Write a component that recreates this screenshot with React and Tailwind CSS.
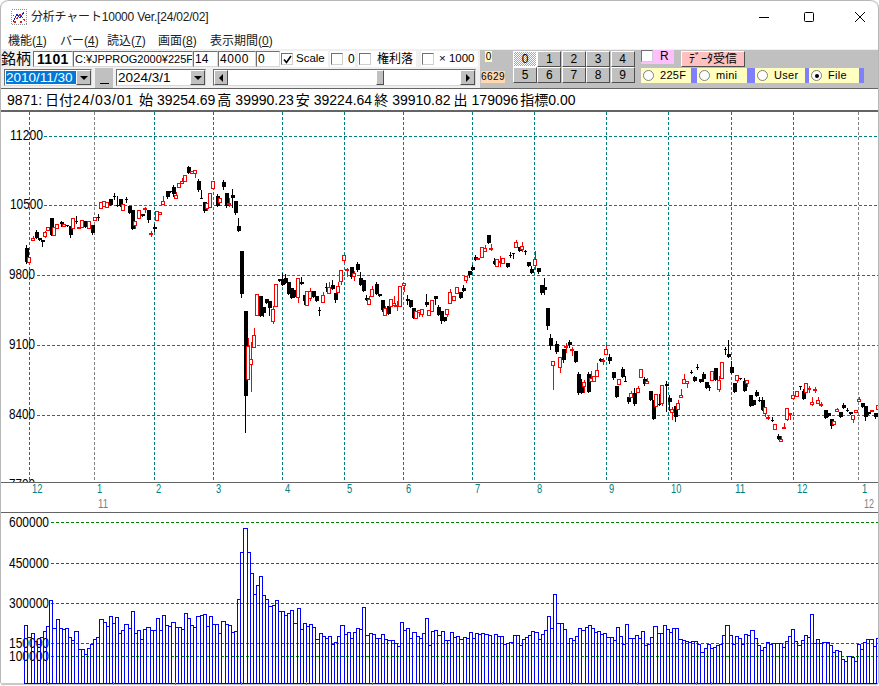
import React from "react";

const FONT = "font-['Liberation_Sans','Noto_Sans_CJK_JP',sans-serif]";
const C4 = [[0,78,388,430,378,432],[1,88,415,428],[1,98,358,364,352],[0,107,340,358,334],[0,116,356,362],[0,125,363,368,363,380],[1,134,340,350,335,353],[1,143,324,332],[0,152,297,347],[1,161,323,347],[1,171,316,328],[0,182,310,316,306,320],[1,192,315,322],[0,200,317,320],[0,209,320,348,320,353],[1,218,298,328],[0,228,305,310,292,312],[1,237,323,328],[1,246,304,323],[0,256,307,323],[1,266,307,326],[0,275,318,342,318,345],[1,285,293,304],[0,294,293,296,285,302],[1,303,250,268],[1,312,246,262],[1,321,250,265],[0,331,240,258],[0,341,232,234,222,240],[0,351,258,262,230,262],[0,360,240,262],[1,369,256,272],[0,378,240,244,235,248],[0,387,260,282],[0,396,272,330],[1,406,306,317,306,327],[1,416,272,298],[0,426,285,290],[1,435,266,270,263,280],[0,444,272,303,272,308],[1,453,341,343,335,352],[0,462,325,330,315,335],[1,471,275,302],[1,481,280,284],[1,490,247,254,232,254],[0,500,217,233,217,237],[0,510,217,220],[0,519,204,226,198,232],[1,528,228,238,220,238],[1,537,192,205],[1,547,186,192,178,192],[1,555,168,185],[0,565,144,161,140,161],[1,576,157,162],[1,585,154,163,154,175],[0,594,186,212,180,216],[0,603,236,238,214,238],[0,612,250,275,250,280],[1,621,252,268,252,272],[1,630,222,265],[1,640,185,208],[0,651,230,262,224,262],[1,660,236,250],[0,669,189,204,183,210],[0,678,222,260,222,265],[1,687,252,256,238,260],[0,696,229,236,210,265],[0,705,246,281,246,285],[0,714,322,335,297,335],[0,724,396,524,396,533],[0,735,576,831,576,938],[1,744,681,780,657,780],[1,752,720,735,669,816],[1,761,648,684,627,684],[1,771,526,589],[0,780,531,590],[0,788,565,582,565,590],[0,798,540,552],[0,808,545,568,545,588],[1,818,570,606,560,612],[1,828,496,562],[0,836,481,486],[0,846,480,497,462,497],[0,855,477,492,465,492],[0,864,490,525],[0,873,508,538],[0,882,513,533]];
const C7 = [[1,23,178,235,178,248],[0,32,188,195,175,195],[0,41,228,246,228,255],[1,50,217,257],[1,59,215,236,208,242],[0,68,215,234],[0,77,231,245],[0,88,272,276,265,288],[1,98,228,250,220,250],[0,107,205,207,192,215],[1,116,205,223,190,223],[0,125,198,210,183,210],[0,134,222,243,222,248],[1,143,202,220,190,220],[1,153,154,186,154,195],[1,162,109,122,109,128],[1,171,151,154,148,170],[0,182,144,174,144,178],[1,191,163,170,155,182],[0,200,135,153,129,156],[0,210,178,197,160,197],[0,219,183,216],[0,227,238,242,228,242],[1,237,241,256,230,256],[1,246,211,230,202,230],[0,258,195,226,188,226],[0,267,225,231],[0,276,244,273,244,276],[1,285,267,289,262,289],[0,294,261,285],[1,303,241,260],[1,312,253,258,232,262],[1,321,258,262,245,272],[1,331,202,260],[1,342,193,197,193,215],[0,351,240,245,228,255],[0,360,243,263],[0,369,267,297],[1,378,277,298],[1,387,273,278,273,290],[1,396,270,286,270,292],[0,407,250,258,225,262],[1,416,274,289],[1,426,244,277],[0,435,231,240,231,255],[0,444,265,287,258,287],[0,453,277,305,277,312],[0,462,293,305],[1,471,271,284,271,292],[1,481,220,253,210,253],[1,491,232,242],[1,501,205,223],[0,510,220,236],[0,519,207,216,198,216],[1,528,172,182,172,188],[0,537,155,168,155,173],[0,546,144,152,138,152],[0,555,114,123,108,123],[1,565,117,120],[1,575,85,115],[1,585,88,97,78,97],[0,594,48,72],[1,603,88,90,75,93],[0,612,125,135,118,135],[1,621,120,142],[1,631,125,128,110,142],[1,640,118,133],[0,651,131,143],[0,659,108,110,98,115],[0,668,102,106,102,117],[1,677,70,83,64,83],[0,687,83,95],[1,696,82,91,70,95],[0,705,97,99,92,105],[0,714,128,140],[0,724,151,162,140,162],[1,734,121,139,97,150],[0,744,148,158,148,162],[0,753,198,222,198,225],[0,763,204,212,178,225],[0,771,267,320,267,330],[0,780,357,380,345,390],[1,790,427,437,427,510],[0,799,376,399,366,402],[1,810,415,445,415,458],[0,819,390,423,390,428],[1,828,382,384,372,398],[0,837,370,378,363,385],[1,846,391,394,385,408],[0,855,397,428],[0,864,477,494],[0,873,501,521,480,521],[1,882,490,498,483,517]];
const C8 = [[0,-7,135,191,130,194],[0,3,170,190,150,190],[1,12,160,170,160,190],[0,23,134,190,128,190],[1,32,148,155,125,155],[1,41,140,155],[1,51,123,140,103,140],[0,59,91,95,86,95],[1,69,94,97,88,105],[1,78,61,74,48,74],[0,88,84,95,75,103],[0,98,129,147,129,150],[0,107,171,203],[1,117,150,164],[0,126,120,145,115,145],[0,135,155,157,140,157],[0,144,205,219,205,222],[1,153,193,203,185,203],[0,163,192,225,178,228],[1,173,178,188,170,188],[1,183,121,145],[0,192,150,164,145,168],[1,201,156,163,148,163],[0,210,187,213],[0,219,213,269],[1,228,196,231],[0,238,226,228,196,228],[1,247,169,221,169,228],[0,258,166,170,155,245],[0,267,206,218,198,243],[1,276,240,250,235,270],[0,285,230,265,230,275],[1,294,223,241,213,241],[1,303,198,203,180,203],[1,312,149,161,135,161],[1,322,157,163,157,175],[0,332,129,133,123,133],[0,342,145,156,140,156],[0,351,113,115,105,120],[0,360,150,158],[0,369,135,150,128,156],[0,378,160,176],[0,388,174,175,168,182],[1,396,127,152],[0,406,117,152],[1,417,153,179,140,185],[1,426,100,146],[0,435,61,63,55,75],[0,443,75,83,33,83],[0,453,115,131,95,131],[0,462,163,188],[1,471,139,152,139,158],[0,481,148,150],[0,491,155,185,148,185],[1,501,154,163,154,172],[0,510,198,230],[0,519,213,227],[0,528,188,201,182,201],[0,537,214,216,205,216],[0,546,213,242,203,242],[1,555,235,253,235,262],[1,565,263,265,258,270],[0,575,273,275,265,275],[1,585,286,301],[0,594,321,329,315,329],[1,603,330,337,320,337],[1,612,293,298,283,298],[1,621,236,270,236,272],[1,630,251,256,251,270],[1,639,199,206,185,206],[1,651,187,201],[0,660,170,172,170,180],[0,669,187,210,180,210],[1,678,163,190],[1,687,177,180,170,190],[1,696,218,224,205,228],[1,705,180,183,173,190],[1,714,214,221,203,221],[1,724,224,226,218,232],[0,735,243,266],[0,744,252,260],[0,753,271,291,271,297],[1,762,276,284],[1,771,240,247,238,247],[0,780,248,263],[0,789,228,237,222,237],[0,800,244,246,238,246],[0,809,248,256],[1,819,259,270,259,280],[1,828,244,250],[1,837,210,215,203,215],[0,846,222,233],[0,855,232,263,232,272],[0,865,250,254],[1,875,243,246],[0,885,252,264,252,268],[1,893,228,239]];
const VOL = [349,385,373,397,405,385,367,352,274,358,331,358,361,358,385,394,367,421,421,436,418,406,391,385,331,340,352,322,343,325,373,364,346,358,307,373,364,391,361,355,364,364,328,364,319,349,352,340,355,355,361,313,328,349,355,322,319,316,352,322,346,346,373,337,346,349,370,367,271,130,58,130,193,256,229,202,259,271,292,289,274,307,307,319,313,304,343,298,
361,343,352,346,355,391,373,382,388,382,406,400,382,349,376,370,388,370,358,361,295,379,373,376,388,388,376,391,394,394,403,412,340,364,358,388,370,382,388,373,328,409,367,364,379,367,394,394,370,385,382,391,385,388,370,388,373,376,373,376,379,403,376,382,382,406,403,400,379,379,409,391,385,379,367,370,391,376,364,322,358,256,343,343,361,403,388,394,382,358,364,355,349,
358,370,367,376,373,385,385,394,355,382,406,346,388,388,379,388,367,409,406,385,352,373,373,349,361,370,358,358,391,394,397,400,397,397,406,430,418,406,418,415,409,406,379,349,379,406,382,388,406,376,379,364,388,409,424,415,400,406,403,403,403,415,397,382,361,397,409,394,379,385,316,403,391,403,400,400,409,430,424,427,451,457,442,445,457,406,421,400,391,391,412,388];

const toCandles = (list, ox, oy) =>
  list.map(([c, x, t, b, h, l]) => ({
    c,
    x: Math.round(ox + x / 3),
    t: Math.round(oy + t / 3),
    b: Math.round(oy + b / 3),
    h: Math.round(oy + (h ?? t) / 3),
    l: Math.round(oy + (l ?? b) / 3),
  }));
const CANDLES = [...toCandles(C4, 0, 120), ...toCandles(C7, 290, 220), ...toCandles(C8, 580, 330)];

const H_GRID = [[137, "11200"], [206, "10500"], [276, "9800"], [346, "9100"], [416, "8400"]];
const V_GRID = [29, 94, 154, 213, 282, 344, 403, 472, 534, 606, 668, 731, 793, 858];
const GRAY_V = [94, 858];
const MONTHS = [["12", 32], ["1", 97], ["2", 156], ["3", 216], ["4", 285], ["5", 347], ["6", 406], ["7", 475], ["8", 537], ["9", 609], ["10", 671], ["11", 735], ["12", 797], ["1", 862]];
const V_LABELS = [[523, "600000"], [564, "450000"], [604, "300000"], [644, "150000"], [657, "100000"]];
const TICKS = [47, 113, 175, 241, 306, 372, 443, 502, 571, 637, 696, 711];

function Label({ x, y, w, fill = "#000", size = 14, children }) {
  return (
    <text x={x} y={y} fontSize={size} fill={fill} textLength={w} lengthAdjust="spacingAndGlyphs" fontFamily="'Liberation Sans',sans-serif">
      {children}
    </text>
  );
}

function Chart() {
  return (
    <svg width="877" height="573" viewBox="1 113 877 573" className="block" shapeRendering="crispEdges">
      {H_GRID.map(([y, t]) => (
        <line key={y} x1={t.length === 5 ? 44 : 37} x2="878" y1={y + 0.5} y2={y + 0.5} stroke="#008080" strokeDasharray="3 2" />
      ))}
      {V_GRID.map((x) => (
        <line key={x} x1={x + 0.5} x2={x + 0.5} y1="113" y2="483" stroke={GRAY_V.includes(x) ? "#808080" : "#008080"} strokeDasharray="3 2" />
      ))}
      {CANDLES.map((d, i) =>
        d.c ? (
          <g key={i} stroke="#ff0000">
            <line x1={d.x + 0.5} x2={d.x + 0.5} y1={d.h} y2={d.l + 1} />
            <rect x={d.x - 1.5} y={d.t + 0.5} width="3" height={Math.max(d.b - d.t, 1)} fill="#fff" />
          </g>
        ) : (
          <g key={i}>
            <line x1={d.x + 0.5} x2={d.x + 0.5} y1={d.h} y2={d.l + 1} stroke="#000" />
            <rect x={d.x - 1} y={d.t} width={d.b - d.t < 2 ? 3 : 4} height={Math.max(d.b - d.t, 1)} fill="#000" />
          </g>
        )
      )}
      <g shapeRendering="auto">
        {H_GRID.map(([y, t]) => (
          <Label key={t} x={t.length === 5 ? 10 : 9} y={y + 4} w={t.length === 5 ? 33 : 26}>{t}</Label>
        ))}
        <Label x={9} y={490} w={26}>7700</Label>
      </g>
      <rect x="1" y="484" width="877" height="29" fill="#fff" />
      <g shapeRendering="auto">
        {MONTHS.map(([t, x], i) => (
          <Label key={i} x={x} y={494} w={t.length * 5.2} fill="#008080" size={12}>{t}</Label>
        ))}
        <Label x={98} y={509} w={10} fill="#808080" size={13}>11</Label>
        <Label x={864} y={509} w={10} fill="#808080" size={13}>12</Label>
      </g>
      <rect x="1" y="483" width="877" height="1" fill="#646464" />
      <rect x="1" y="513" width="877" height="1" fill="#646464" />
      <rect x="1" y="684" width="877" height="2" fill="#c8c8c8" />
      {V_LABELS.map(([y]) => (
        <line key={y} x1="51" x2="878" y1={y + 0.5} y2={y + 0.5} stroke="#008000" strokeDasharray="3 2" />
      ))}
      <g shapeRendering="auto">
        {V_LABELS.map(([y, t]) => (
          <Label key={t} x={9} y={y + 5} w={40}>{t}</Label>
        ))}
      </g>
      {VOL.map((v, i) => {
        const x = Math.round(24.3 + i * 3.13);
        const nx = Math.round(24.3 + (i + 1) * 3.13);
        return <rect key={i} x={x + 0.5} y={Math.round(510 + v / 3) + 0.5} width={nx - x} height={684 - Math.round(510 + v / 3)} fill="none" stroke="#0000ff" />;
      })}
      {TICKS.map((x) => (
        <rect key={x} x={x} y="683" width="1" height="3" fill="#808080" />
      ))}
    </svg>
  );
}

const sunken = "border border-t-[#707070] border-l-[#707070] border-r-[#d8d8d8] border-b-[#d8d8d8] bg-white";
const raised = "border border-t-white border-l-white border-r-[#505050] border-b-[#505050] bg-[#c0c0c0]";

function Box({ w, bold, children, size = "text-[12px]" }) {
  return (
    <div style={{ width: w }} className={`${sunken} h-[16px] pl-[1px] flex items-center overflow-hidden text-black leading-none whitespace-nowrap ${size} ${bold ? "font-bold" : ""}`}>
      {children}
    </div>
  );
}

function Check({ checked }) {
  return (
    <span className="w-[12px] h-[12px] shrink-0 bg-white border border-t-[#707070] border-l-[#707070] border-r-[#d0d0d0] border-b-[#d0d0d0] flex items-center justify-center">
      {checked && (
        <svg width="9" height="9" viewBox="0 0 9 9"><path d="M1 4.5 L3.5 7.5 L8 1" fill="none" stroke="#000" strokeWidth="1.6" /></svg>
      )}
    </span>
  );
}

function Arrow({ dir = "down" }) {
  const d = { down: "M0 0 L8 0 L4 4 Z", left: "M4 0 L4 8 L0 4 Z", right: "M0 0 L0 8 L4 4 Z" }[dir];
  const size = dir === "down" ? [8, 4] : [4, 8];
  return <svg width={size[0]} height={size[1]} viewBox={`0 0 ${size[0]} ${size[1]}`}><path d={d} fill="#000" /></svg>;
}

function Combo({ w, selected, children }) {
  return (
    <div style={{ width: w }} className={`${sunken} h-[17px] flex items-center text-[13.5px] leading-none`}>
      <div className="flex-1 min-w-0 overflow-hidden pl-px">
        <span className={selected ? "bg-[#0078d7] text-white block whitespace-nowrap" : "whitespace-nowrap"}>{children}</span>
      </div>
      <span className={`${raised} w-[15px] h-[15px] flex items-center justify-center shrink-0`}><Arrow /></span>
    </div>
  );
}

function Radio({ label, checked, tail }) {
  return (
    <div className="flex h-[15px]">
      <div className="w-[50px] bg-[#ffffc0] flex items-center pl-[2px] gap-[6px] text-[11px] tracking-[0.3px] leading-none">
        <span className="w-[11px] h-[11px] rounded-full bg-white border border-[#808080] flex items-center justify-center shrink-0">
          {checked && <span className="w-[4px] h-[4px] rounded-full bg-black" />}
        </span>
        {label}
      </div>
      <div className="bg-[#8080ff]" style={{ width: tail }} />
    </div>
  );
}

function NumBtn({ n, active }) {
  return (
    <div className={`w-[24px] h-[16px] text-[12px] leading-none flex items-center justify-center ${raised} ${active ? "border-t-[#505050] border-l-[#505050] border-r-white border-b-white bg-[repeating-conic-gradient(#a8a8a8_0_25%,#ffffff_0_50%)] bg-[length:2px_2px]" : ""}`}>
      {n}
    </div>
  );
}

export default function App() {
  const menus = [["機能", "1", "w-[52px]"], ["バー", "4", "w-[47px]"], ["読込", "7", "w-[51px]"], ["画面", "8", "w-[52px]"], ["表示期間", "0", ""]];
  return (
    <div className={`${FONT} relative w-[879px] h-[686px] overflow-hidden bg-white border-x border-[#b8b8b8] rounded-t-[8px] rounded-b-[5px] text-black flex flex-col`}>
      {/* title bar */}
      <div className="h-[33px] shrink-0 flex items-center pl-[10px] pb-px border-t border-[#b8b8b8] rounded-t-[8px]">
        <svg width="16" height="16" viewBox="0 0 16 16" className="mr-[4px]" shapeRendering="crispEdges">
          <rect x="0.5" y="0.5" width="15" height="15" fill="#fff" stroke="#909090" strokeDasharray="1 1" />
          <path d="M2 13 L6 5 L9 9 L13 3" fill="none" stroke="#2020c0" />
          <path d="M2 6 L6 10 L9 5 L14 12" fill="none" stroke="#e02020" strokeDasharray="2 1" />
          <rect x="3" y="12" width="2" height="2" fill="#e02020" />
          <rect x="9" y="12" width="2" height="2" fill="#e02020" />
        </svg>
        <span className="text-[12px] leading-none text-[#202020] tracking-[-0.2px]">分析チャート10000 Ver.[24/02/02]</span>
        <div className="ml-auto flex items-center h-full">
          <svg width="12" height="12" viewBox="0 0 12 12" className="mr-[33px]"><path d="M1 6.5 H11" stroke="#000" /></svg>
          <svg width="12" height="12" viewBox="0 0 12 12" className="mr-[39px]"><rect x="1.5" y="1.5" width="9" height="9" fill="none" stroke="#000" rx="1" /></svg>
          <svg width="12" height="12" viewBox="0 0 12 12" className="mr-[12px]"><path d="M1 1 L11 11 M11 1 L1 11" stroke="#000" /></svg>
        </div>
      </div>
      {/* menu */}
      <div className="h-[16px] shrink-0 flex items-center pl-[7px] text-[12px] leading-none text-[#202020]">
        {menus.map(([t, n, w]) => (
          <span key={t} className={`${w} whitespace-nowrap`}>{t}(<span className="underline">{n}</span>)</span>
        ))}
      </div>
      {/* toolbar */}
      <div className="h-[40px] shrink-0 bg-[#c0c0c0] border-t border-[#f0f0f0] border-b border-b-[#646464] flex">
        <div className="w-[479px] shrink-0 flex flex-col bg-[#f0f0f0]">
          <div className="flex items-start h-[19px] pt-[1px]">
            <span className="w-[32px] h-[16px] text-[15px] leading-[16px] whitespace-nowrap">銘柄</span>
            <Box w={40} bold size="text-[14px]"><span className="pl-[2px] tracking-[0.3px]">1101</span></Box>
            <Box w={120} size="text-[11px]">C:¥JPPROG2000¥225F</Box>
            <Box w={25}>14</Box>
            <Box w={38}><span className="tracking-[0.6px]">4000</span></Box>
            <Box w={24}>0</Box>
            <div className="w-[48px] h-[16px] bg-white flex items-center pl-[1px] gap-[3px] text-[11.5px] leading-none"><Check checked />Scale</div>
            <div className="ml-[2px] w-[25px] h-[16px] bg-white flex items-center pl-[1px] gap-[5px] text-[12px] leading-none"><Check /><span>0</span></div>
            <div className="ml-[3px] w-[58px] h-[16px] bg-white flex items-center pl-[1px] gap-[6px] text-[12px] leading-none"><Check /><span className="whitespace-nowrap">権利落</span></div>
            <div className="ml-[5px] w-[57px] h-[16px] bg-white flex items-center pl-[1px] gap-[5px] text-[11.5px] leading-none"><Check /><span className="whitespace-nowrap">× 1000</span></div>
          </div>
          <div className="flex items-start h-[20px] pl-[3px]">
            <div className="mt-[1px]"><Combo w={88} selected>2010/11/30</Combo></div>
            <div className="ml-[3px] w-[18px] h-[20px] bg-[#c0c0c0] flex items-end justify-center pb-[4px]"><span className="block w-[9px] h-px bg-black" /></div>
            <div className="ml-[3px] mt-[1px]"><Combo w={90}>2024/3/1</Combo></div>
            <div className={`ml-[7px] mt-[1px] w-[263px] h-[17px] flex ${sunken}`}>
              <span className={`${raised} w-[14px] h-full flex items-center justify-center shrink-0`}><Arrow dir="left" /></span>
              <div className="w-[148px]" />
              <span className={`${raised} w-[8px] h-full shrink-0`} />
              <div className="flex-1" />
              <span className={`${raised} w-[15px] h-full flex items-center justify-center shrink-0`}><Arrow dir="right" /></span>
            </div>
          </div>
        </div>
        <div className="w-[32px] shrink-0 flex flex-col pl-[1px] pt-[1px]">
          <span className="ml-[4px] w-[7px] h-[11px] bg-[#ffffc0] text-[10px] leading-[11px] text-center">0</span>
          <span className="mt-[9px] w-[24px] h-[12px] bg-[#ffd8b0] text-[10px] leading-[12px] text-center tracking-[0.4px]">6629</span>
        </div>
        <div className="ml-[1px] w-[122px] shrink-0 grid grid-cols-5 content-start pt-[1px] gap-y-0 gap-x-0">
          {[0, 1, 2, 3, 4, 5, 6, 7, 8, 9].map((n) => <NumBtn key={n} n={n} active={n === 0} />)}
        </div>
        <div className="ml-[6px] flex flex-col">
          <div className="flex h-[17px] items-start">
            <div className="flex h-[14px] w-[33px] bg-[#ffbfff]">
              <span className="w-[12px] h-[12px] bg-white border border-t-[#707070] border-l-[#707070] border-r-[#d0d0d0] border-b-[#d0d0d0]" />
              <span className="pl-[7px] text-[12px] leading-[12px]">R</span>
            </div>
            <div className="ml-[7px] mt-px w-[64px] h-[16px] bg-[#ffc0c0] border border-t-white border-l-white border-r-[#505050] border-b-[#505050] text-[12px] leading-[14px] text-center whitespace-nowrap">ﾃﾞｰﾀ受信</div>
          </div>
          <div className="flex mt-[1px]">
            <Radio label="225F" tail={6} />
            <Radio label="mini" tail={8} />
            <Radio label="User" tail={4} />
            <Radio label="File" checked tail={5} />
          </div>
        </div>
      </div>
      {/* info */}
      <div className="h-[21px] shrink-0 flex items-center pl-[6px] text-[14px] leading-none whitespace-nowrap border-b-2 border-[#646464] box-content">
        <span>9871:</span>
        <span className="ml-[3px]">日付</span>
        <span className="tracking-[0.8px]">24/03/01</span>
        <span className="ml-[5px]">始</span>
        <span className="ml-[4px]">39254.69</span>
        <span className="ml-[2px]">高</span>
        <span className="ml-[4px]">39990.23</span>
        <span className="ml-[2px]">安</span>
        <span className="ml-[4px]">39224.64</span>
        <span className="ml-[2px]">終</span>
        <span className="ml-[4px]">39910.82</span>
        <span className="ml-[3px]">出</span>
        <span className="ml-[4px]">179096</span>
        <span className="ml-[2px]">指標</span>
        <span>0.00</span>
      </div>
      <Chart />
    </div>
  );
}
